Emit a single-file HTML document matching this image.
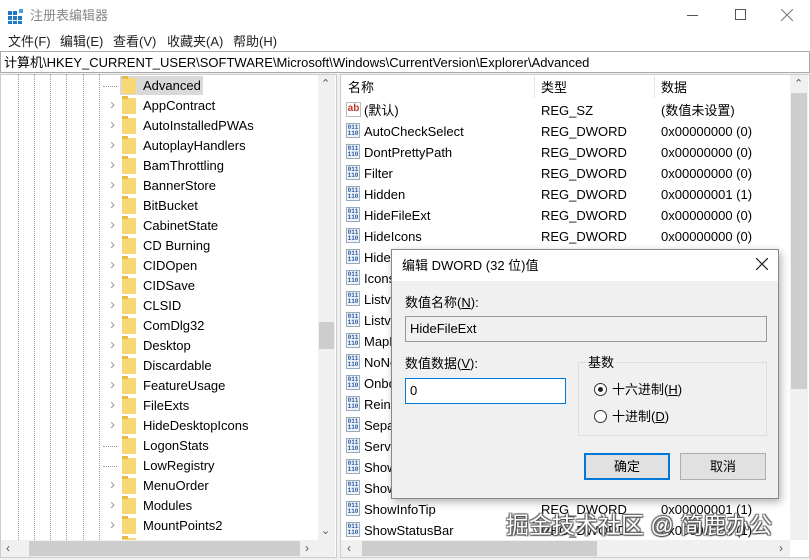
<!DOCTYPE html>
<html><head><meta charset="utf-8"><style>
*{margin:0;padding:0;box-sizing:border-box}
body{width:810px;height:560px;overflow:hidden;background:#f0f0f0;font-family:"Liberation Sans","Noto Sans CJK SC",sans-serif;font-size:13px;line-height:16px;color:#000;position:relative}
.a{position:absolute;white-space:nowrap}
.fold{position:absolute;width:14px;height:16px;background:#f8d775;border-radius:1px}
.fold:before{content:"";position:absolute;left:0;top:-2px;width:6px;height:3px;background:#e8b94a}
.chev{position:absolute;color:#999;font-size:15px;line-height:16px}
.dw{position:absolute;width:14px;height:15px;border:1px solid #9ab;background:#eef3fa;font-size:6px;line-height:6px;color:#2a5aa0;font-weight:bold;text-align:center;padding-top:1px;font-family:"Liberation Mono",monospace}
.ab{position:absolute;width:15px;height:15px;border:1px solid #bbb;background:#fff;font-size:10px;line-height:12px;color:#c0392b;font-weight:bold;text-align:center}
.dot{position:absolute;top:74px;height:466px;border-left:1px dotted #999}
</style></head><body>
<div class="a" style="left:0;top:0;width:810px;height:30px;background:#fff"></div>
<svg class="a" style="left:8px;top:8px" width="16" height="16"><rect x="0" y="3" width="4" height="4" fill="#1e78c8"/><rect x="5" y="3" width="4" height="4" fill="#1e78c8"/><rect x="0" y="8" width="4" height="4" fill="#1e78c8"/><rect x="5" y="8" width="4" height="4" fill="#1e78c8"/><rect x="10" y="8" width="4" height="4" fill="#1e78c8"/><rect x="0" y="13" width="4" height="3" fill="#1e78c8"/><rect x="5" y="13" width="4" height="3" fill="#1e78c8"/><rect x="10" y="13" width="4" height="3" fill="#1e78c8"/><rect x="11" y="1" width="4" height="4" fill="#3fa0e8"/></svg>
<div class="a" style="left:30px;top:8px;font-size:13px;color:#888">注册表编辑器</div>
<div class="a" style="left:687px;top:15px;width:11px;border-top:1px solid #555"></div>
<div class="a" style="left:735px;top:9px;width:11px;height:11px;border:1px solid #555"></div>
<svg class="a" style="left:781px;top:9px" width="12" height="12"><path d="M0 0L12 12M12 0L0 12" stroke="#777" stroke-width="1"/></svg>
<div class="a" style="left:0;top:30px;width:810px;height:22px;background:#fff"></div>
<div class="a" style="left:8px;top:34px;color:#222">文件(F)</div>
<div class="a" style="left:60px;top:34px;color:#222">编辑(E)</div>
<div class="a" style="left:113px;top:34px;color:#222">查看(V)</div>
<div class="a" style="left:167px;top:34px;color:#222">收藏夹(A)</div>
<div class="a" style="left:233px;top:34px;color:#222">帮助(H)</div>
<div class="a" style="left:0;top:51px;width:810px;height:22px;background:#fff;border:1px solid #aaa"></div>
<div class="a" style="left:4px;top:55px;color:#000">计算机\HKEY_CURRENT_USER\SOFTWARE\Microsoft\Windows\CurrentVersion\Explorer\Advanced</div>
<div class="a" style="left:0;top:74px;width:337px;height:484px;background:#fff;border:1px solid #ccc"></div>
<div class="dot" style="left:18px"></div><div class="dot" style="left:34px"></div><div class="dot" style="left:50px"></div><div class="dot" style="left:66px"></div><div class="dot" style="left:83px"></div><div class="dot" style="left:99px"></div>
<div class="a" style="left:120px;top:76px;width:83px;height:19px;background:#d9d9d9"></div>
<div id="tree"></div>
<div class="a" style="left:318px;top:75px;width:17px;height:465px;background:#f0f0f0"></div>
<div class="a" style="left:321px;top:76px;font-size:11px;color:#555">⌃</div>
<div class="a" style="left:319px;top:322px;width:15px;height:27px;background:#cdcdcd"></div>
<div class="a" style="left:321px;top:523px;font-size:11px;color:#555">⌄</div>
<div class="a" style="left:1px;top:540px;width:334px;height:17px;background:#f0f0f0"></div>
<div class="a" style="left:29px;top:541px;width:271px;height:15px;background:#cdcdcd"></div>
<div class="a" style="left:6px;top:540px;font-size:12px;color:#555">‹</div>
<div class="a" style="left:305px;top:540px;font-size:12px;color:#555">›</div>
<div class="a" style="left:340px;top:74px;width:470px;height:484px;background:#fff;border:1px solid #ccc"></div>
<div class="a" style="left:348px;top:80px">名称</div>
<div class="a" style="left:541px;top:80px">类型</div>
<div class="a" style="left:661px;top:80px">数据</div>
<div class="a" style="left:534px;top:76px;height:22px;border-left:1px solid #e5e5e5"></div>
<div class="a" style="left:654px;top:76px;height:22px;border-left:1px solid #e5e5e5"></div>
<div id="list"></div>
<div class="a" style="left:790px;top:75px;width:18px;height:465px;background:#f0f0f0"></div>
<div class="a" style="left:794px;top:76px;font-size:11px;color:#555">⌃</div>
<div class="a" style="left:791px;top:93px;width:16px;height:296px;background:#cdcdcd"></div>
<div class="a" style="left:341px;top:540px;width:449px;height:17px;background:#f0f0f0"></div>
<div class="a" style="left:362px;top:541px;width:235px;height:15px;background:#cdcdcd"></div>
<div class="a" style="left:347px;top:540px;font-size:12px;color:#555">‹</div>
<div class="a" style="left:779px;top:540px;font-size:12px;color:#555">›</div>
<div class="a" style="left:391px;top:249px;width:388px;height:250px;background:#f0f0f0;border:1px solid #888;box-shadow:2px 3px 8px rgba(0,0,0,.3)"></div>
<div class="a" style="left:392px;top:250px;width:386px;height:31px;background:#fff"></div>
<div class="a" style="left:402px;top:258px;font-size:13px">编辑 DWORD (32 位)值</div>
<svg class="a" style="left:756px;top:258px" width="12" height="12"><path d="M0 0L12 12M12 0L0 12" stroke="#222" stroke-width="1.2"/></svg>
<div class="a" style="left:405px;top:295px">数值名称(<u>N</u>):</div>
<div class="a" style="left:405px;top:316px;width:362px;height:26px;background:#f0f0f0;border:1px solid #999"></div>
<div class="a" style="left:410px;top:321px">HideFileExt</div>
<div class="a" style="left:405px;top:356px">数值数据(<u>V</u>):</div>
<div class="a" style="left:405px;top:378px;width:161px;height:26px;background:#fff;border:1px solid #0078d7"></div>
<div class="a" style="left:410px;top:383px">0</div>
<div class="a" style="left:578px;top:362px;width:189px;height:74px;border:1px solid #ddd"></div>
<div class="a" style="left:586px;top:355px;background:#f0f0f0;padding:0 2px">基数</div>
<div class="a" style="left:594px;top:383px;width:13px;height:13px;border:1px solid #333;border-radius:50%;background:#fff"></div>
<div class="a" style="left:598px;top:387px;width:5px;height:5px;border-radius:50%;background:#222"></div>
<div class="a" style="left:612px;top:382px">十六进制(<u>H</u>)</div>
<div class="a" style="left:594px;top:410px;width:13px;height:13px;border:1px solid #333;border-radius:50%;background:#fff"></div>
<div class="a" style="left:612px;top:409px">十进制(<u>D</u>)</div>
<div class="a" style="left:584px;top:453px;width:86px;height:27px;background:#e1e1e1;border:2px solid #0078d7;text-align:center;line-height:23px">确定</div>
<div class="a" style="left:680px;top:453px;width:86px;height:27px;background:#e1e1e1;border:1px solid #adadad;text-align:center;line-height:25px">取消</div>
<div class="a" style="left:506px;top:512px;font-size:23px;line-height:26px;color:#fff;text-shadow:1px 1px 1px #444,-1px -1px 1px #666,1px -1px 1px #666,-1px 1px 1px #666">掘金技术社区 @ 简鹿办公</div>
<script>
var t=["Advanced","AppContract","AutoInstalledPWAs","AutoplayHandlers","BamThrottling","BannerStore","BitBucket","CabinetState","CD Burning","CIDOpen","CIDSave","CLSID","ComDlg32","Desktop","Discardable","FeatureUsage","FileExts","HideDesktopIcons","LogonStats","LowRegistry","MenuOrder","Modules","MountPoints2",""];
var h="";t.forEach(function(n,i){var y=76+20*i;
if(i>0&&i<23&&[18,19].indexOf(i)<0)h+='<div class="chev" style="left:110px;top:'+(y+1)+'px">›</div>';
else h+='<div class="a" style="left:103px;top:'+(y+10)+'px;width:14px;border-top:1px dotted #999"></div>';
h+='<div class="fold" style="left:122px;top:'+(y+2)+'px"></div>';
if(n)h+='<div class="a" style="left:143px;top:'+(y+2)+'px">'+n+'</div>';});
document.getElementById("tree").innerHTML=h;
var L=[["(默认)","REG_SZ","(数值未设置)",1],["AutoCheckSelect","REG_DWORD","0x00000000 (0)"],["DontPrettyPath","REG_DWORD","0x00000000 (0)"],["Filter","REG_DWORD","0x00000000 (0)"],["Hidden","REG_DWORD","0x00000001 (1)"],["HideFileExt","REG_DWORD","0x00000000 (0)"],["HideIcons","REG_DWORD","0x00000000 (0)"],["HideMergeConflicts","",""],["IconsOnly","",""],["ListviewAlphaSelect","",""],["ListviewShadow","",""],["MapNetDrvBtn","",""],["NoNetCrawling","",""],["OnboardUnpinCortana","",""],["ReindexedProfile","",""],["SeparateProcess","",""],["ServerAdminUI","",""],["ShowCompColor","",""],["ShowEncryptCompressedColor","",""],["ShowInfoTip","REG_DWORD","0x00000001 (1)"],["ShowStatusBar","REG_DWORD","0x00000001 (1)"]];
h="";L.forEach(function(r,i){var y=101+21*i;
h+=r[3]?'<div class="ab" style="left:346px;top:'+(y+1)+'px">ab</div>':'<div class="dw" style="left:346px;top:'+(y+1)+'px">011<br>110</div>';
h+='<div class="a" style="left:364px;top:'+(y+2)+'px">'+r[0]+'</div><div class="a" style="left:541px;top:'+(y+2)+'px">'+r[1]+'</div><div class="a" style="left:661px;top:'+(y+2)+'px">'+r[2]+'</div>';});
document.getElementById("list").innerHTML=h;
</script>
</body></html>
